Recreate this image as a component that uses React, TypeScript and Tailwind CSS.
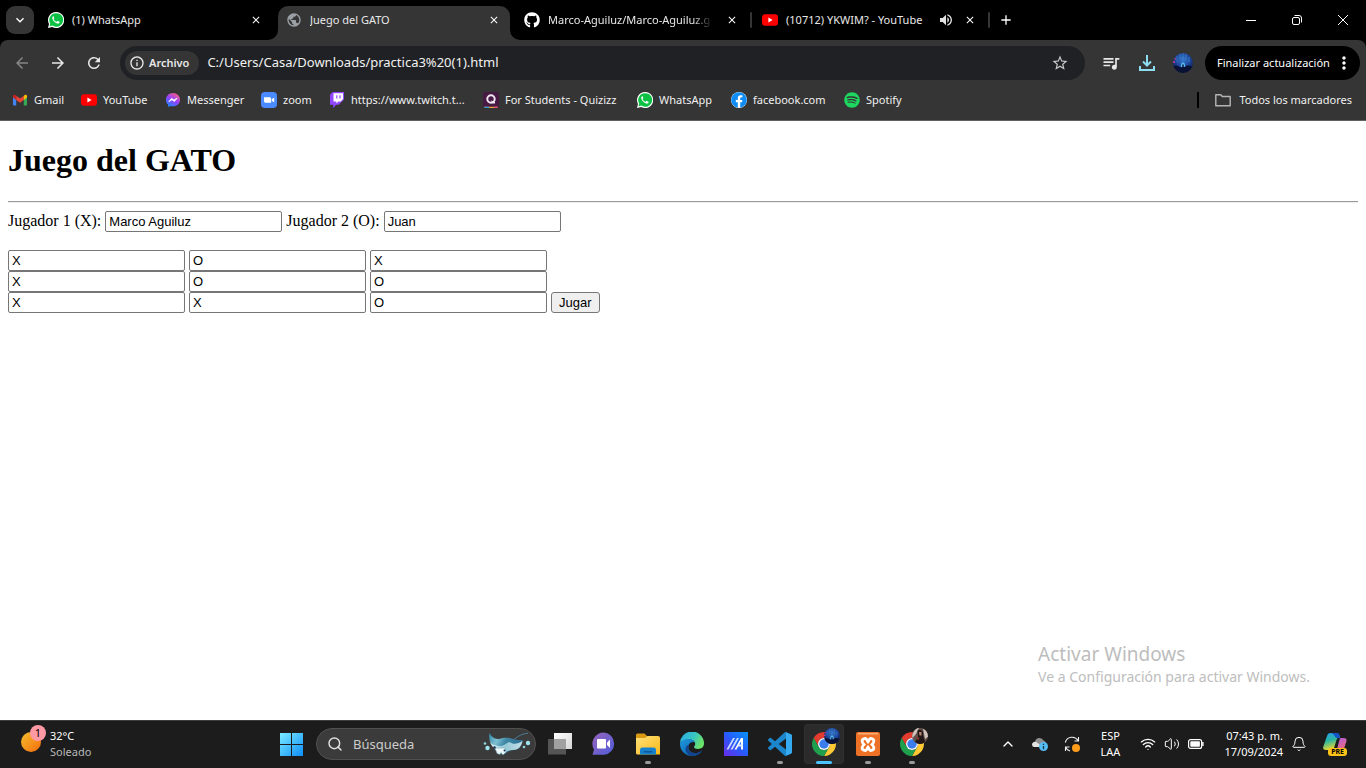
import React, { useState } from "react";
import { FaFacebook, FaGithub, FaSpotify } from "react-icons/fa";
import {
  MdAdd, MdArrowBack, MdArrowForward, MdClose, MdInfoOutline, MdKeyboardArrowDown,
  MdMoreVert, MdPublic, MdQueueMusic, MdRefresh, MdStarBorder, MdVolumeUp,
} from "react-icons/md";
import { Bell, ChevronUp, Search, Volume2, Wifi } from "lucide-react";

function WhatsAppLogo() {
  return (
    <svg viewBox="0 0 16 16" className="size-4 shrink-0">
      <path d="M8 0a8 8 0 0 0-7 11.9L0 16l4.200-1.100A8 8 0 1 0 8 0z" fill="#fff" />
      <path d="M8 1.200a6.800 6.800 0 0 0-5.800 10.300l-.6 2.800 2.900-.7A6.800 6.800 0 1 0 8 1.200z" fill="#0cc143" />
      <path d="M5.700 4.200c-.3-.1-.7 0-.9.300-.6.700-.7 1.700-.2 2.800.9 2 2.400 3.500 4.500 4.200 1 .3 2 0 2.400-.8.2-.4.2-.9 0-1l-1.700-.8c-.3-.1-.5.100-.8.500-.3.400-.5.500-.9.300-1.100-.5-1.900-1.300-2.400-2.200-.2-.3.100-.5.300-.8.2-.3.300-.5.200-.7z" fill="#fff" />
    </svg>
  );
}

function YouTubeLogo() {
  return (
    <svg viewBox="0 0 16 16" className="size-4 shrink-0">
      <rect y="2.300" width="16" height="11.400" rx="3" fill="#f00" />
      <path d="M6.400 5.600v4.800L10.600 8z" fill="#fff" />
    </svg>
  );
}

function GmailLogo() {
  return (
    <svg viewBox="0 0 16 16" className="size-4 shrink-0">
      <path d="M1 4v8.500c0 .6.400 1 1 1h2.200V6.500z" fill="#4285f4" />
      <path d="M11.800 6.500v7H14c.6 0 1-.4 1-1V4z" fill="#34a853" />
      <path d="M4.200 3.700v4.200L8 10.800l3.800-2.900V3.700L8 6.600z" fill="#ea4335" />
      <path d="M1 4.200v1.300l3.200 2.400V3.700l-.7-.5C2.500 2.400 1 3 1 4.200z" fill="#c5221f" />
      <path d="M11.800 3.700v4.200L15 5.500V4.200c0-1.200-1.500-1.800-2.500-1z" fill="#fbbc04" />
    </svg>
  );
}

function MessengerLogo() {
  return (
    <svg viewBox="0 0 16 16" className="size-4 shrink-0">
      <defs>
        <linearGradient id="messenger" x1=".2" y1="1" x2=".8" y2="0">
          <stop offset="0" stopColor="#1688ff" />
          <stop offset=".5" stopColor="#9440ff" />
          <stop offset="1" stopColor="#ff5e7c" />
        </linearGradient>
      </defs>
      <path d="M8 1C4 1 .9 3.900.9 7.700c0 2 .8 3.700 2.100 4.900l.1 2.300 2.200-1c.8.300 1.700.4 2.700.4 4 0 7.100-2.900 7.100-6.600S12 1 8 1z" fill="url(#messenger)" />
      <path d="M3.800 9.600 6.600 6.300l2.300 1.700 3.300-2-2.800 3.500-2.400-1.700z" fill="#fff" stroke="#fff" strokeWidth=".7" strokeLinejoin="round" />
    </svg>
  );
}

function ZoomLogo() {
  return (
    <svg viewBox="0 0 16 16" className="size-4 shrink-0">
      <rect width="16" height="16" rx="4" fill="#4a8cff" />
      <path d="M3 5.300h5.500c1 0 1.600.6 1.600 1.600v3.800H4.600c-1 0-1.600-.6-1.600-1.600z" fill="#fff" />
      <path d="M10.700 7.200 13.200 5.400v5.200l-2.500-1.800z" fill="#fff" />
    </svg>
  );
}

function TwitchLogo() {
  return (
    <svg viewBox="0 0 16 16" className="size-4 shrink-0">
      <path d="M3.500 0 1 2.800v10h3.200V16l3-3.200h2.600L15 7.500V0z" fill="#9146ff" />
      <path d="M4.500 1.200H14V7l-2.300 2.400H9.400l-2 2v-2H4.500z" fill="#fff" />
      <path d="M7.200 3.200h1.200v3.300H7.200zM10.400 3.200h1.200v3.300h-1.200z" fill="#9146ff" />
    </svg>
  );
}

function QuizizzLogo() {
  return (
    <svg viewBox="0 0 16 16" className="size-4 shrink-0">
      <rect width="16" height="16" rx="2.500" fill="#461a42" />
      <path d="M1 14.700h14c-.3.800-1 1.300-2 1.300H3c-1 0-1.700-.5-2-1.300z" fill="#e8a33c" />
      <path d="M1 14.700h5V16H3c-1 0-1.700-.5-2-1.300z" fill="#2d9cdb" />
      <path d="M11 14.700h4c-.3.800-1 1.300-2 1.300h-2z" fill="#ec4e7c" />
      <circle cx="8" cy="7" r="3.700" fill="none" stroke="#f3e6f3" strokeWidth="2" />
      <path d="m8 8.500 4 1.200v1.800H9.500z" fill="#f3e6f3" />
    </svg>
  );
}

function NightAvatar({ id, className }: { id: string; className: string }) {
  return (
    <svg viewBox="0 0 20 20" className={className}>
      <defs>
        <clipPath id={id}><circle cx="10" cy="10" r="10" /></clipPath>
        <radialGradient id={`${id}-glow`} cx=".5" cy=".35" r=".6">
          <stop offset="0" stopColor="#3579cc" /><stop offset=".6" stopColor="#1e459a" /><stop offset="1" stopColor="#122052" />
        </radialGradient>
      </defs>
      <g clipPath={`url(#${id})`}>
        <rect width="20" height="20" fill={`url(#${id}-glow)`} />
        <path d="M4 3v6M7 1v5M10 0v6M13 1v6M16 4v5" stroke="#4d98dd" strokeWidth=".5" />
        <path d="M0 8h2v2H0zM1.500 5h1.500v1.500H1.500z" fill="#b23a9d" />
        <path d="M0 14c3-3 5-1 7 0s4 0 6-1 5 0 7 1v6H0z" fill="#091235" />
        <path d="M10 9.500c1.800 0 2.200 2 2.200 4.500H7.800c0-2.500.4-4.500 2.200-4.500z" fill="#58b5ed" />
        <path d="M9.300 11.500h1.400V16H9.300z" fill="#071030" />
      </g>
    </svg>
  );
}

function Tab({ icon, title, active, audio, fade, separator }: {
  icon: React.ReactNode; title: string; active?: boolean; audio?: boolean; fade?: boolean; separator?: boolean;
}) {
  return (
    <div className="relative flex h-[34px] w-[238px] min-w-0 shrink">
      <div className={active
        ? "mr-1.5 flex min-w-0 flex-1 items-center rounded-t-[10px] bg-[#353535] px-2 pb-1.5"
        : "mr-1.5 flex min-w-0 flex-1 items-center px-2 pb-1.5"}>
        {icon}
        <span className={fade
          ? "mr-2 ml-2 flex-1 overflow-hidden mask-r-from-[86%] mask-r-to-[98%] text-[11px] whitespace-nowrap text-[#e8e8e8]"
          : "ml-2 flex-1 overflow-hidden text-[11px] whitespace-nowrap text-[#e8e8e8]"}>
          {title}
        </span>
        {audio && <MdVolumeUp className="mr-2 size-4 shrink-0 text-[#e3e3e3]" />}
        <button type="button" aria-label="Cerrar pestaña" className="flex size-4 shrink-0 items-center justify-center text-white">
          <MdClose className="size-3" />
        </button>
      </div>
      {active && (
        <>
          <svg viewBox="0 0 10 10" className="absolute bottom-0 -left-2.5 size-2.5"><path d="M10 0v10H0A10 10 0 0 0 10 0z" fill="#353535" /></svg>
          <svg viewBox="0 0 10 10" className="absolute -right-1 bottom-0 size-2.5"><path d="M0 0v10h10A10 10 0 0 1 0 0z" fill="#353535" /></svg>
        </>
      )}
      {separator && <span className="absolute top-1.5 right-0.5 h-4 w-0.5 rounded bg-[#353535]" />}
    </div>
  );
}

function TabStrip() {
  return (
    <div className="flex h-10 bg-black pt-1.5">
      <button type="button" aria-label="Buscar pestañas" className="mx-1.5 flex size-7 shrink-0 items-center justify-center rounded-[9px] bg-[#353535] text-white">
        <MdKeyboardArrowDown className="size-4" />
      </button>
      <Tab icon={<WhatsAppLogo />} title="(1) WhatsApp" />
      <Tab icon={<MdPublic className="size-4 shrink-0 text-[#9aa0a6]" />} title="Juego del GATO" active />
      <Tab icon={<FaGithub className="size-4 shrink-0 text-white" />} title="Marco-Aguiluz/Marco-Aguiluz.g" fade separator />
      <Tab icon={<YouTubeLogo />} title="(10712) YKWIM? - YouTube" audio separator />
      <button type="button" aria-label="Nueva pestaña" className="flex size-7 shrink-0 items-center justify-center text-white">
        <MdAdd className="size-4" />
      </button>
      <div className="ml-auto flex h-7">
        <button type="button" aria-label="Minimizar" className="flex w-[46px] items-center justify-center">
          <span className="h-px w-2.5 bg-white" />
        </button>
        <button type="button" aria-label="Restaurar" className="flex w-[46px] items-center justify-center">
          <svg viewBox="0 0 10 10" className="size-2.5" fill="none" stroke="#fff">
            <rect x=".5" y="2.500" width="7" height="7" rx="1.500" />
            <path d="M2.500.5h4.500a2.500 2.500 0 0 1 2.500 2.500v4.500" />
          </svg>
        </button>
        <button type="button" aria-label="Cerrar" className="flex w-[46px] items-center justify-center">
          <svg viewBox="0 0 10 10" className="size-2.5" stroke="#fff"><path d="m0 0 10 10M10 0 0 10" /></svg>
        </button>
      </div>
    </div>
  );
}

function Toolbar() {
  const nav = "flex size-9 shrink-0 items-center justify-center";
  return (
    <div className="bg-black">
      <div className="flex h-[46px] items-center rounded-t-lg bg-[#353535] pr-1.5 pl-1 text-[#e8e8e8]">
        <button type="button" aria-label="Atrás" className={nav}><MdArrowBack className="size-[18px] text-[#858585]" /></button>
        <button type="button" aria-label="Adelante" className={nav}><MdArrowForward className="size-[18px]" /></button>
        <button type="button" aria-label="Recargar" className={nav}><MdRefresh className="size-[18px]" /></button>
        <div className="ml-2 flex h-[34px] flex-1 items-center rounded-full bg-[#202124] pr-4 pl-[5px]">
          <button type="button" className="flex h-6 items-center gap-1 rounded-full bg-[#353535] pr-2.5 pl-1 text-[11px] font-semibold">
            <MdInfoOutline className="size-4" />
            Archivo
          </button>
          <input aria-label="Dirección" defaultValue="C:/Users/Casa/Downloads/practica3%20(1).html"
            className="ml-2 min-w-0 flex-1 bg-transparent text-[13px] text-[#f1f1f1] outline-none" />
          <button type="button" aria-label="Añadir a marcadores"><MdStarBorder className="size-[18px] text-[#c7c7c7]" /></button>
        </div>
        <div className="ml-2 flex">
          <button type="button" aria-label="Controlar multimedia" className={nav}><MdQueueMusic className="size-5" /></button>
          <button type="button" aria-label="Descargas" className={nav}>
            <svg viewBox="0 0 16 16" className="size-4" fill="none" stroke="#8edcf0" strokeWidth="2">
              <path d="M8 0v10M4 6.500l4 4 4-4M1 11v4h14v-4" />
            </svg>
          </button>
          <button type="button" aria-label="Perfil" className={nav}><NightAvatar id="profile" className="size-5" /></button>
        </div>
        <button type="button" className="ml-1 flex h-[34px] w-[155px] shrink-0 items-center justify-between rounded-full bg-black pr-2 pl-3 text-[11px] whitespace-nowrap text-white">
          Finalizar actualización
          <MdMoreVert className="size-5 -mr-0.5" />
        </button>
      </div>
    </div>
  );
}

const bookmarks = [
  { label: "Gmail", icon: <GmailLogo />, width: "w-[53px]" },
  { label: "YouTube", icon: <YouTubeLogo />, width: "w-[68px]" },
  { label: "Messenger", icon: <MessengerLogo />, width: "w-20" },
  { label: "zoom", icon: <ZoomLogo />, width: "w-[52px]" },
  { label: "https://www.twitch.t...", icon: <TwitchLogo />, width: "w-[138px]" },
  { label: "For Students - Quizizz", icon: <QuizizzLogo />, width: "w-[138px]" },
  { label: "WhatsApp", icon: <WhatsAppLogo />, width: "w-[78px]" },
  {
    label: "facebook.com",
    icon: <span className="size-4 shrink-0 rounded-full bg-white"><FaFacebook className="size-4 text-[#0f8cf5]" /></span>,
    width: "w-[97px]",
  },
  { label: "Spotify", icon: <FaSpotify className="size-4 shrink-0 text-[#1ed760]" />, width: "w-[60px]" },
];

function BookmarkBar() {
  return (
    <nav className="flex h-[35px] border-b border-[#606060] bg-[#353535] pr-3.5 pb-1.5 pl-3 text-[11px] text-[#f0f0f0]">
      <div className="flex min-w-0 items-center gap-4">
        {bookmarks.map((b) => (
          <a key={b.label} href="#" className={`flex shrink-0 items-center gap-1.5 whitespace-nowrap ${b.width}`}>
            {b.icon}
            {b.label}
          </a>
        ))}
      </div>
      <div className="ml-auto flex shrink-0 items-center">
        <span className="mr-4 h-4 w-0.5 bg-black" />
        <button type="button" className="flex items-center gap-2 whitespace-nowrap">
          <svg viewBox="0 0 16 16" className="size-4" fill="none" stroke="#b5b5b5" strokeWidth="1.400" strokeLinejoin="round">
            <path d="M.8 2.700h5l1.500 1.800h7.900v9.200H.8z" />
          </svg>
          Todos los marcadores
        </button>
      </div>
    </nav>
  );
}

const field = "h-[21px] w-[177px] rounded-[2px] border border-[#767676] bg-white px-[3px] font-['Liberation_Sans',Arial,sans-serif] text-[13px] text-black outline-none";

function GamePage() {
  const [board, setBoard] = useState([["X", "O", "X"], ["X", "O", "O"], ["X", "X", "O"]]);
  const change = (row: number, col: number, value: string) =>
    setBoard(board.map((r, i) => (i === row ? r.map((c, j) => (j === col ? value : c)) : r)));
  return (
    <main className="relative flex-1 bg-white px-2 font-['Liberation_Serif','Times_New_Roman',serif] text-base text-black">
      <h1 className="mt-[21px] text-[32px] leading-[37px] font-bold">Juego del GATO</h1>
      <hr className="mt-[22px] border-t border-b border-t-[#9a9a9a] border-b-[#eeeeee]" />
      <form onSubmit={(e) => e.preventDefault()} className="mt-2">
        <div className="mb-[18px] flex items-start gap-1 leading-5">
          <label htmlFor="player1">Jugador 1 (X):</label>
          <input id="player1" className={field} defaultValue="Marco Aguiluz" />
          <label htmlFor="player2">Jugador 2 (O):</label>
          <input id="player2" className={field} defaultValue="Juan" />
        </div>
        {board.map((row, i) => (
          <div key={i} className="flex gap-1">
            {row.map((cell, j) => (
              <input key={j} aria-label={`Fila ${i + 1}, columna ${j + 1}`} className={field} value={cell}
                onChange={(e) => change(i, j, e.target.value)} />
            ))}
            {i === 2 && (
              <button type="submit" className="h-[21px] rounded-[3px] border border-[#767676] bg-[#efefef] px-[7px] font-['Liberation_Sans',Arial,sans-serif] text-[13px] leading-[19px]">
                Jugar
              </button>
            )}
          </div>
        ))}
      </form>
      <div className="absolute right-14 bottom-8 font-['Noto_Sans','Open_Sans',sans-serif] text-[#bdbdbd]">
        <p className="text-[19px] leading-6">Activar Windows</p>
        <p className="text-sm leading-[22px]">Ve a Configuración para activar Windows.</p>
      </div>
    </main>
  );
}

function StartIcon() {
  return (
    <svg viewBox="0 0 24 24" className="size-6">
      <defs>
        <linearGradient id="start" x1="0" y1="0" x2="24" y2="24" gradientUnits="userSpaceOnUse">
          <stop offset="0" stopColor="#82f1ff" /><stop offset="1" stopColor="#0c8dfa" />
        </linearGradient>
      </defs>
      <path d="M1 1h11v11H1zM13 1h11v11H13zM1 13h11v11H1zM13 13h11v11H13z" fill="url(#start)" />
    </svg>
  );
}

function MantaIcon() {
  return (
    <svg viewBox="0 0 48 24" className="h-6 w-12">
      <defs>
        <linearGradient id="manta" x1="0" y1="0" x2="1" y2=".3">
          <stop offset="0" stopColor="#2d86a6" /><stop offset=".3" stopColor="#7fc0d2" />
          <stop offset=".55" stopColor="#3f87a6" /><stop offset="1" stopColor="#2d6f92" />
        </linearGradient>
        <linearGradient id="mantaBelly" x1="0" y1="0" x2="1" y2="0">
          <stop offset="0" stopColor="#eefafb" /><stop offset=".5" stopColor="#a7d5df" /><stop offset="1" stopColor="#e0f4f6" />
        </linearGradient>
      </defs>
      <path d="M30 8c6-4 8-6 15-6.800" fill="none" stroke="#4b7f96" strokeWidth="1" />
      <path d="M6.500 1c2 4 5 6 9.500 6 4-1 9-2 14 0 3 1 7 1 10 1-1 6-4 10-9 10-4 .5-6 1-9 4-4 1-7-1-9-4-4-4-8-9-6.500-17z" fill="url(#manta)" />
      <path d="M6.500 9c2 4 5 4 9 5 5 1 7-3 11-4 4 3 8 2 13-1-1 5-4 9-9 9-4 0-6 1-9 3-4 0-7-1-9-3-3-3-5-6-6-9z" fill="url(#mantaBelly)" opacity=".85" />
      <path d="m12 16 2 5.500 3 1 1-2 2 2.500 3-3-1-4z" fill="#edf8f9" stroke="#5f97ab" strokeWidth=".5" />
      <circle cx="11.500" cy="15.500" r="1.200" fill="#172b4a" /><circle cx="21.500" cy="18.500" r="1" fill="#172b4a" />
      <circle cx="4.500" cy="16" r="2.200" fill="#9ee4ef" /><circle cx="2" cy="11.500" r="1.300" fill="#8dd5e2" />
      <circle cx="45" cy="11" r="2.200" fill="#9ee4ef" /><circle cx="41" cy="15" r="1.300" fill="#8dd5e2" />
    </svg>
  );
}

function ChromeIcon() {
  return (
    <svg viewBox="2 2 44 44" className="size-6">
      <path d="M4.950 13A22 22 0 0 1 43.050 13H24A11 11 0 0 0 14.470 29.500z" fill="#e33b2e" />
      <path d="M43.050 13A22 22 0 0 1 24 46l9.530-16.500A11 11 0 0 0 24 13z" fill="#fcc934" />
      <path d="M24 46A22 22 0 0 1 4.950 13l9.520 16.500a11 11 0 0 0 19.060 0z" fill="#1fa04f" />
      <circle cx="24" cy="24" r="11" fill="#fff" /><circle cx="24" cy="24" r="8.700" fill="#3b7ded" />
    </svg>
  );
}

function PortraitAvatar() {
  return (
    <svg viewBox="0 0 16 16" className="absolute -top-1 -right-1 size-4">
      <circle cx="8" cy="8" r="8" fill="#63504b" />
      <path d="M1.500 4C3 1.500 5 .3 7 .1L4 6l-3.500 4C0 8 .2 6 1.500 4zM11 .7c3 1.300 5 4.300 5 8L13 11z" fill="#cfc2ba" />
      <path d="M5.500 2.500c3-2 6.500 1 5.500 4l2 7.500c-3 2.500-7 2.500-10 0l3-5z" fill="#211717" />
      <path d="M7 4h2.500v3.500H7.500z" fill="#b6846e" /><path d="m4.500 9 3 .8-1.500 3z" fill="#8d382f" />
    </svg>
  );
}

const apps = [
  {
    name: "Vista de tareas",
    icon: (
      <svg viewBox="0 0 24 24" className="size-6">
        <defs><linearGradient id="pane" x1="0" y1="0" x2="1" y2="1"><stop offset="0" stopColor="#fff" /><stop offset="1" stopColor="#d5d5d5" /></linearGradient></defs>
        <path d="M0 7h18v15.500H0z" fill="#555" /><path d="M6 1h18v16H6z" fill="url(#pane)" /><path d="M6 7h12v10H6z" fill="#a0a0a0" />
      </svg>
    ),
  },
  {
    name: "Chat",
    icon: (
      <svg viewBox="0 0 24 24" className="size-6">
        <defs><linearGradient id="chat" x1="0" y1="0" x2="1" y2="1"><stop offset="0" stopColor="#9863bc" /><stop offset="1" stopColor="#4f5edb" /></linearGradient></defs>
        <path d="M12 .5A11.300 11.300 0 0 0 2 17.500L.5 22.800h11.500a11.200 11.200 0 0 0 0-22.300z" fill="url(#chat)" />
        <rect x="5" y="7" width="9" height="9.500" rx="1" fill="#fff" /><path d="M15 10.500 18 7.500v8.500l-3-3z" fill="#fff" />
      </svg>
    ),
  },
  {
    name: "Explorador de archivos", running: true,
    icon: (
      <svg viewBox="0 0 24 24" className="size-6">
        <defs><linearGradient id="folder" x1="0" y1="0" x2="1" y2="1"><stop offset="0" stopColor="#ffe17a" /><stop offset="1" stopColor="#f9b818" /></linearGradient></defs>
        <path d="M0 3a1.500 1.500 0 0 1 1.500-1.500h7L11 4v3H0z" fill="#d99a12" />
        <path d="M0 6h9l2.500-2H22a2 2 0 0 1 2 2v16.500H1.500A1.500 1.500 0 0 1 0 21z" fill="url(#folder)" />
        <path d="M4 22.500V18a2.500 2.500 0 0 1 2.500-2.500h11A2.500 2.500 0 0 1 20 18v4.500z" fill="#1681cc" />
        <rect x="7.500" y="19" width="9" height="1.500" rx=".7" fill="#0c5a99" />
      </svg>
    ),
  },
  {
    name: "Microsoft Edge",
    icon: (
      <svg viewBox="0 0 24 24" className="size-6">
        <defs>
          <linearGradient id="edgeTop" x1="0" y1="0" x2="1" y2=".4"><stop offset="0" stopColor="#29a9e6" /><stop offset=".6" stopColor="#38c5c2" /><stop offset="1" stopColor="#6ae16a" /></linearGradient>
          <linearGradient id="edgeLow" x1="0" y1="0" x2="1" y2="1"><stop offset="0" stopColor="#1c9ae0" /><stop offset="1" stopColor="#0d529b" /></linearGradient>
        </defs>
        <path d="M0 12A12 12 0 0 1 24 11c.2 4-2.500 6-6 6-2.500 0-4-1-4-2 0-.8 1.200-1.200 1.200-3 0-2.500-2.500-4.500-6-4.500C5 7.500 1 9 0 12z" fill="url(#edgeTop)" />
        <path d="M0 12c1-3.500 4.500-5 8.500-5 3 0 5.500 1.500 6.500 3.500-1.500-1-4.500-.5-6 2-2 3.500.5 8 5 8.500 3.500.4 6-.8 8-2.500C20 22 16.500 24 12 24A12 12 0 0 1 0 12z" fill="url(#edgeLow)" />
        <path d="M9 12.500c-2 4 .5 8 5 8.500 3.500.4 6-.8 8-2.500-1 3-5 5.500-9.500 5.500-4-.5-7-3.500-7-7 0-2 1.500-4 3.500-4.500z" fill="#12448d" />
      </svg>
    ),
  },
  {
    name: "MyASUS",
    icon: (
      <svg viewBox="0 0 24 24" className="size-6">
        <defs><linearGradient id="asus" x1="0" y1="1" x2="1" y2="0"><stop offset="0" stopColor="#6a2be8" /><stop offset=".5" stopColor="#265bfa" /><stop offset="1" stopColor="#0893fa" /></linearGradient></defs>
        <path d="M0 0h24v24H0z" fill="url(#asus)" />
        <path d="M2.500 17.500 9 6h2L4.500 17.500zM6.500 17.500 13 6h2L8.500 17.500z" fill="#c9dbff" />
        <path d="M10.500 17.500 17 6h2v11.500h-2v-8l-4.500 8z" fill="#fff" /><path d="M14 12.500h5v2h-6z" fill="#dce7ff" />
      </svg>
    ),
  },
  {
    name: "Visual Studio Code", running: true,
    icon: (
      <svg viewBox="0 0 24 24" className="size-6" fill="#1c86cc">
        <path d="M23.150 2.587 18.210.21a1.494 1.494 0 0 0-1.705.29l-9.460 8.630-4.120-3.128a.999.999 0 0 0-1.276.057L.327 7.261A1 1 0 0 0 .326 8.740L3.899 12 .326 15.260a1 1 0 0 0 .001 1.479L1.650 17.940a.999.999 0 0 0 1.276.057l4.120-3.128 9.460 8.630a1.492 1.492 0 0 0 1.704.29l4.942-2.377A1.500 1.500 0 0 0 24 20.060V3.939a1.500 1.500 0 0 0-.85-1.352zm-5.146 14.861L10.826 12l7.178-5.448v10.896z" />
        <path d="m18 .2 5.200 2.400c.5.300.8.800.8 1.300v16.200c0 .5-.3 1-.8 1.300L18 23.800z" fill="#35aaf0" />
      </svg>
    ),
  },
  {
    name: "Google Chrome", running: true, active: true,
    icon: <><ChromeIcon /><NightAvatar id="chromeProfile" className="absolute -top-1 -right-1 size-4" /></>,
  },
  {
    name: "XAMPP", running: true,
    icon: (
      <svg viewBox="0 0 24 24" className="size-6">
        <rect width="24" height="24" rx="2" fill="#ee7225" />
        <path d="M2 1h20v1.500H2z" fill="#f7ad78" />
        <path d="M7.500 7c3.500-2 3.500 2 4.500 3 1-1 1-5 4.500-3 2.500 1.500 1 4-.5 5.500 1.500 1.500 3 4 .5 5.500-3.500 2-3.500-2-4.500-3-1 1-1 5-4.500 3C5 16.500 6.500 14 8 12.500 6.500 11 5 8.500 7.500 7z" fill="none" stroke="#fff" strokeWidth="2.800" />
      </svg>
    ),
  },
  { name: "Google Chrome, segundo perfil", running: true, icon: <><ChromeIcon /><PortraitAvatar /></> },
];

function CopilotIcon() {
  return (
    <svg viewBox="0 0 24 24" className="size-6">
      <defs>
        <linearGradient id="copA" x1="0" y1="0" x2=".3" y2="1"><stop offset="0" stopColor="#2c9cf4" /><stop offset=".5" stopColor="#28b6a0" /><stop offset="1" stopColor="#e8d634" /></linearGradient>
        <linearGradient id="copB" x1="0" y1="0" x2=".5" y2="1"><stop offset="0" stopColor="#a25bea" /><stop offset="1" stopColor="#f56b75" /></linearGradient>
      </defs>
      <path d="M17 6h4c2 0 3 1.500 2.500 3l-2.500 8c-.5 1.500-2 3-4 3h-6c2 0 2.500-2 3-3z" fill="url(#copB)" />
      <path d="M7.500 1H14c2 0 2.500 2 3 5-2 0-3 0-3.500 2L11 16c-.5 1.500-1.500 2-3 2H3c-2.500 0-3.500-1.500-2.500-4L4 4c.7-2 1.500-3 3.500-3z" fill="url(#copA)" />
      <path d="M7.500 1H14c2 0 2.500 2 3 5h-3c-2 0-3-5-6.500-5z" fill="#1553cb" />
    </svg>
  );
}

function Taskbar() {
  return (
    <footer className="flex h-12 shrink-0 items-center border-t border-[#3d3d3d] bg-[#1c1c1c] pb-0.5 text-[11px] leading-4 text-white">
      <button type="button" className="flex w-[269px] shrink-0 items-center gap-[9px] pl-[21px] text-left">
        <span className="relative mb-1 size-5 rounded-full bg-linear-to-br from-[#f2bd2c] to-[#f36a0b]">
          <span className="absolute -top-[7px] left-[9px] flex size-4 items-center justify-center rounded-full bg-[#ff99a4] text-[11px] text-black">1</span>
        </span>
        <span>32°C<br /><span className="text-[#b8b8b8]">Soleado</span></span>
      </button>
      <nav className="flex items-center">
        <button type="button" aria-label="Inicio" className="flex w-11 justify-center"><StartIcon /></button>
        <label className="mr-0.5 ml-[3px] flex h-8 w-[220px] items-center rounded-full border border-[#505050] bg-[#3b3b3b] pr-1 pl-2.5">
          <Search className="size-4 shrink-0 text-[#e0e0e0]" strokeWidth={2.2} />
          <input aria-label="Búsqueda" placeholder="Búsqueda" className="ml-2.5 min-w-0 flex-1 bg-transparent text-[13px] outline-none placeholder:text-[#cccccc]" />
          <MantaIcon />
        </label>
        {apps.map((app) => (
          <button key={app.name} type="button" aria-label={app.name} className="flex w-11 items-center justify-center">
            <span className={app.active
              ? "relative flex size-10 items-center justify-center rounded bg-[#2b2b2b] ring-1 ring-[#303030] ring-inset"
              : "relative flex size-10 items-center justify-center"}>
              <span className="relative">{app.icon}</span>
              {app.running && (
                <span className={app.active
                  ? "absolute bottom-0 h-[3px] w-4 rounded-full bg-[#4cc2ff]"
                  : "absolute bottom-0 h-[3px] w-1.5 rounded-full bg-[#9a9a9a]"} />
              )}
            </span>
          </button>
        ))}
      </nav>
      <div className="ml-auto flex shrink-0 items-center pr-[19px]">
        <button type="button" aria-label="Iconos ocultos" className="flex w-8 justify-center"><ChevronUp className="size-4" /></button>
        <button type="button" aria-label="OneDrive" className="flex w-8 justify-center">
          <svg viewBox="0 0 16 16" className="size-4">
            <path d="M3 6a4.500 4.500 0 0 1 8.500-1.500A3.500 3.500 0 0 1 12 11H3.500A3 3 0 0 1 3 6z" fill="#8e8e8e" />
            <path d="M0 8.800a3 3 0 0 1 5-2.200l6 4.400H3a2.500 2.500 0 0 1-3-2.200z" fill="#e2e2e2" />
            <circle cx="11.500" cy="10.500" r="4.500" fill="#55bdf4" /><path d="M11.500 7.800v1.300M11.500 10v3.200" stroke="#14354a" strokeWidth="1.300" />
          </svg>
        </button>
        <button type="button" aria-label="Actualizaciones" className="flex w-8 justify-center">
          <svg viewBox="0 0 16 16" className="size-4" fill="none" stroke="#eee" strokeWidth="1.100">
            <path d="M1.300 6.500A7 7 0 0 1 14 4.500M14.500 1v4h-4M6 15a7 7 0 0 1-4.500-4M1.500 15v-4h4" />
            <circle cx="12" cy="12" r="4" fill="#ff9c1a" stroke="none" />
          </svg>
        </button>
        <button type="button" className="w-11 text-center">ESP<br />LAA</button>
        <button type="button" aria-label="Red, volumen y batería" className="ml-2 flex items-center gap-2">
          <Wifi className="size-4" />
          <Volume2 className="size-4" strokeWidth={1.5} />
          <svg viewBox="0 0 16 16" className="size-4">
            <rect x=".6" y="3.600" width="13" height="8.800" rx="2" fill="none" stroke="#fff" strokeWidth="1.200" />
            <rect x="2.300" y="5.300" width="9.600" height="5.400" rx=".8" fill="#fff" /><path d="M14.900 6v4" stroke="#fff" strokeWidth="1.400" />
          </svg>
        </button>
        <button type="button" className="ml-5 text-right">07:43 p. m.<br />17/09/2024</button>
        <button type="button" aria-label="Notificaciones" className="mr-4 ml-2"><Bell className="size-4" strokeWidth={1.5} /></button>
        <button type="button" aria-label="Copilot" className="relative">
          <CopilotIcon />
          <span className="absolute right-0 bottom-0 rounded-[3px] bg-[#fcc419] px-[3px] text-[7px] leading-2 font-bold text-black">PRE</span>
        </button>
      </div>
    </footer>
  );
}

export default function App() {
  return (
    <div className="flex min-h-screen flex-col overflow-hidden font-['Noto_Sans','Open_Sans',sans-serif]">
      <header>
        <TabStrip />
        <Toolbar />
        <BookmarkBar />
      </header>
      <GamePage />
      <Taskbar />
    </div>
  );
}
